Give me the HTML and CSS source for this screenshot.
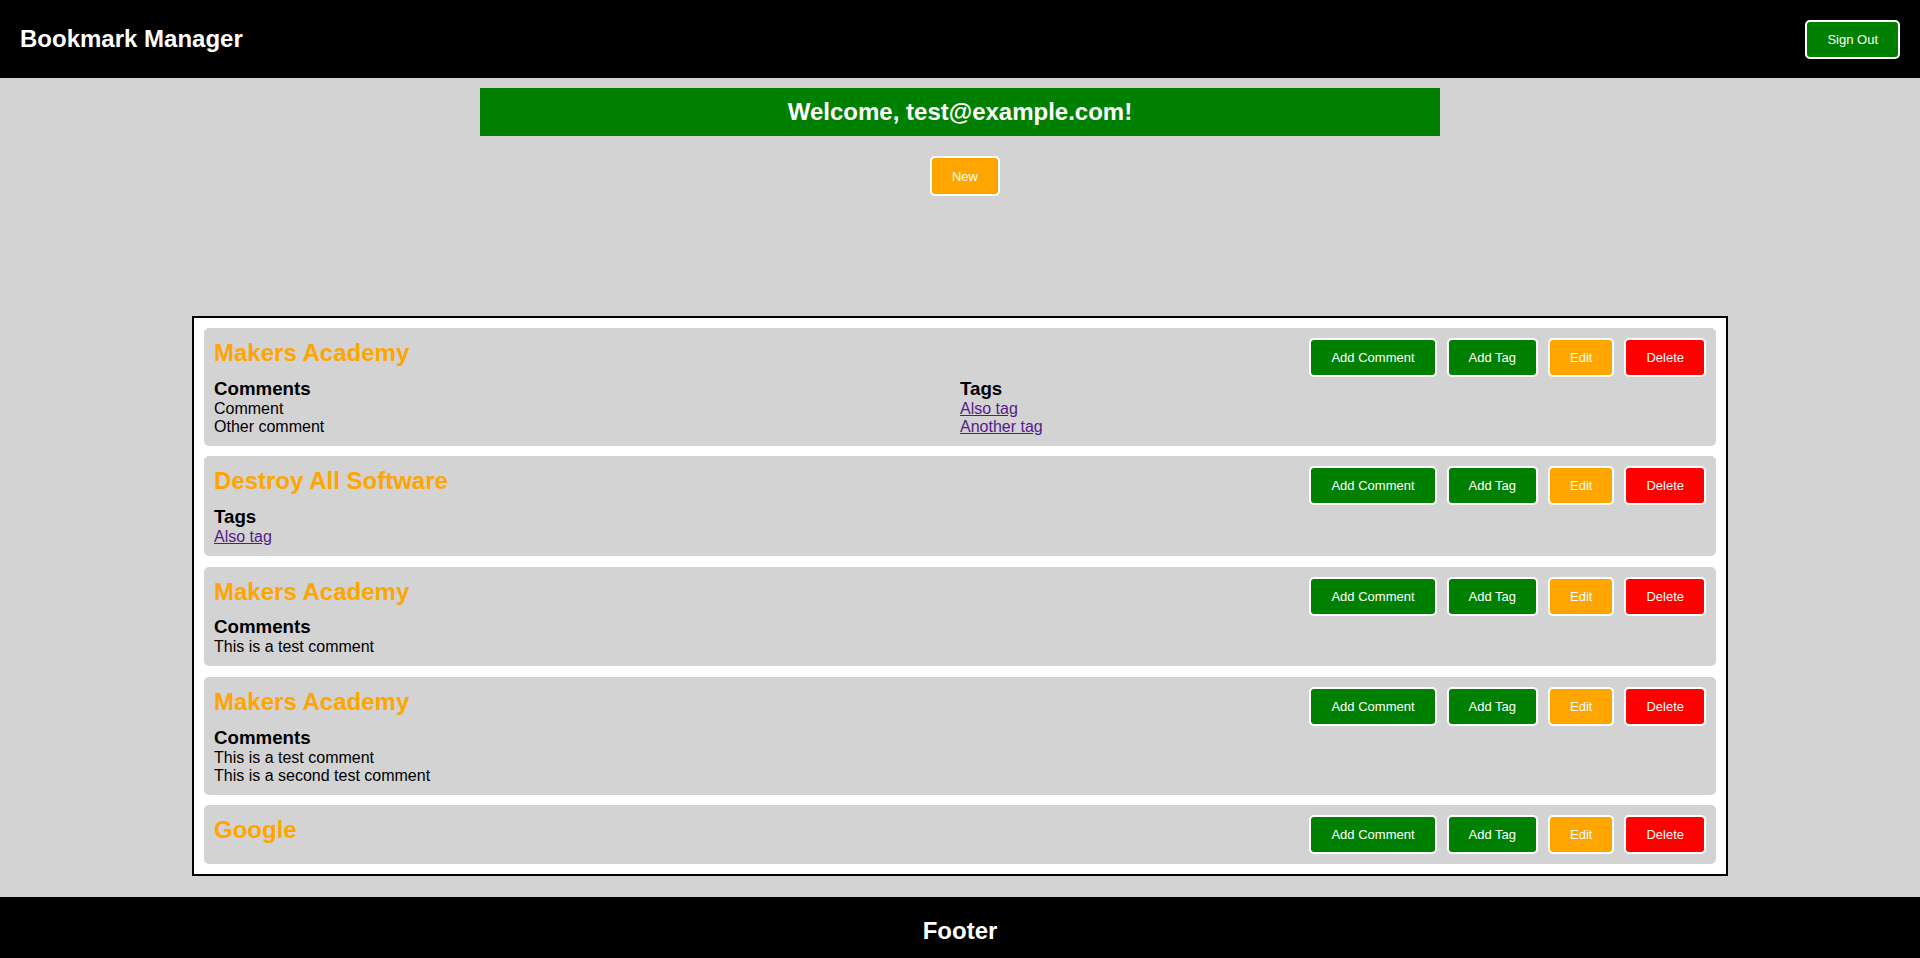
FILE: index.html
```html
<!DOCTYPE html>
<html lang="en">
<head>
<meta charset="utf-8">
<title>Bookmark Manager</title>
<link rel="stylesheet" href="styles.css">
</head>
<body>
<header class="topbar">
  <div class="brand">Bookmark Manager</div>
  <button class="btn btn-green">Sign Out</button>
</header>

<main class="main">
  <div class="welcome">Welcome, test@example.com!</div>
  <div class="new-row">
    <button class="btn btn-orange">New</button>
  </div>

  <section class="list">
    <article class="card">
      <div class="card-head">
        <h2 class="card-title">Makers Academy</h2>
        <div class="actions">
          <button class="btn btn-green">Add Comment</button>
          <button class="btn btn-green">Add Tag</button>
          <button class="btn btn-orange">Edit</button>
          <button class="btn btn-red">Delete</button>
        </div>
      </div>
      <div class="card-body">
        <div class="group">
          <h3 class="group-title">Comments</h3>
          <div class="line">Comment</div>
          <div class="line">Other comment</div>
        </div>
        <div class="group">
          <h3 class="group-title">Tags</h3>
          <div class="line"><a class="tag" href="#">Also tag</a></div>
          <div class="line"><a class="tag" href="#">Another tag</a></div>
        </div>
      </div>
    </article>

    <article class="card">
      <div class="card-head">
        <h2 class="card-title">Destroy All Software</h2>
        <div class="actions">
          <button class="btn btn-green">Add Comment</button>
          <button class="btn btn-green">Add Tag</button>
          <button class="btn btn-orange">Edit</button>
          <button class="btn btn-red">Delete</button>
        </div>
      </div>
      <div class="card-body">
        <div class="group">
          <h3 class="group-title">Tags</h3>
          <div class="line"><a class="tag" href="#">Also tag</a></div>
        </div>
      </div>
    </article>

    <article class="card">
      <div class="card-head">
        <h2 class="card-title">Makers Academy</h2>
        <div class="actions">
          <button class="btn btn-green">Add Comment</button>
          <button class="btn btn-green">Add Tag</button>
          <button class="btn btn-orange">Edit</button>
          <button class="btn btn-red">Delete</button>
        </div>
      </div>
      <div class="card-body">
        <div class="group">
          <h3 class="group-title">Comments</h3>
          <div class="line">This is a test comment</div>
        </div>
      </div>
    </article>

    <article class="card">
      <div class="card-head">
        <h2 class="card-title">Makers Academy</h2>
        <div class="actions">
          <button class="btn btn-green">Add Comment</button>
          <button class="btn btn-green">Add Tag</button>
          <button class="btn btn-orange">Edit</button>
          <button class="btn btn-red">Delete</button>
        </div>
      </div>
      <div class="card-body">
        <div class="group">
          <h3 class="group-title">Comments</h3>
          <div class="line">This is a test comment</div>
          <div class="line">This is a second test comment</div>
        </div>
      </div>
    </article>

    <article class="card">
      <div class="card-head">
        <h2 class="card-title">Google</h2>
        <div class="actions">
          <button class="btn btn-green">Add Comment</button>
          <button class="btn btn-green">Add Tag</button>
          <button class="btn btn-orange">Edit</button>
          <button class="btn btn-red">Delete</button>
        </div>
      </div>
    </article>
  </section>
</main>

<footer class="footer">Footer</footer>
</body>
</html>
```

FILE: styles.css
```css
* {
  box-sizing: border-box;
}

html, body {
  margin: 0;
  padding: 0;
}

body {
  background: #d3d3d3;
  font-family: "Liberation Sans", Arial, sans-serif;
  color: #000;
}

.topbar {
  height: 78px;
  background: #000;
  display: flex;
  align-items: center;
  justify-content: space-between;
  padding: 0 20px;
}

.brand {
  color: #fff;
  font-size: 24px;
  font-weight: bold;
}

.btn {
  font-family: "Liberation Sans", Arial, sans-serif;
  font-size: 13px;
  line-height: 15px;
  color: #fff;
  border: 2px solid #fff;
  border-radius: 5px;
  padding: 10px 20px;
  margin: 0;
  cursor: pointer;
}

.btn-green {
  background: #008000;
}

.btn-orange {
  background: #ffa500;
}

.btn-red {
  background: #ff0000;
}

.main {
  display: flex;
  flex-direction: column;
  align-items: center;
}

.welcome {
  width: 960px;
  margin-top: 10px;
  background: #008000;
  color: #fff;
  font-size: 24px;
  font-weight: bold;
  text-align: center;
  padding: 10px;
}

.new-row {
  margin-top: 20px;
  padding-left: 10px;
  display: flex;
  justify-content: center;
}

.new-row .btn {
  height: 40px;
}

.list {
  width: 1536px;
  margin-top: 120px;
  background: #fff;
  border: 2px solid #000;
  padding: 10px;
  display: flex;
  flex-direction: column;
  gap: 10.5px;
}

.card {
  background: #d3d3d3;
  border-radius: 5px;
  padding: 10px;
}

.card-head {
  display: flex;
  justify-content: space-between;
  align-items: flex-start;
}

.card-title {
  margin: 1px 0 0;
  color: #ffa500;
  font-size: 24px;
  font-weight: bold;
}

.actions {
  display: flex;
  gap: 10px;
}

.card-body {
  display: grid;
  grid-template-columns: 1fr 1fr;
  margin-top: 0.8px;
}

.group-title {
  margin: 0;
  font-size: 18.72px;
  font-weight: bold;
}

.line {
  font-size: 16px;
}

.tag {
  color: #551a8b;
  text-decoration: underline;
}

.footer {
  margin-top: 21px;
  background: #000;
  color: #fff;
  font-size: 24px;
  font-weight: bold;
  text-align: center;
  padding: 20px;
}
```
